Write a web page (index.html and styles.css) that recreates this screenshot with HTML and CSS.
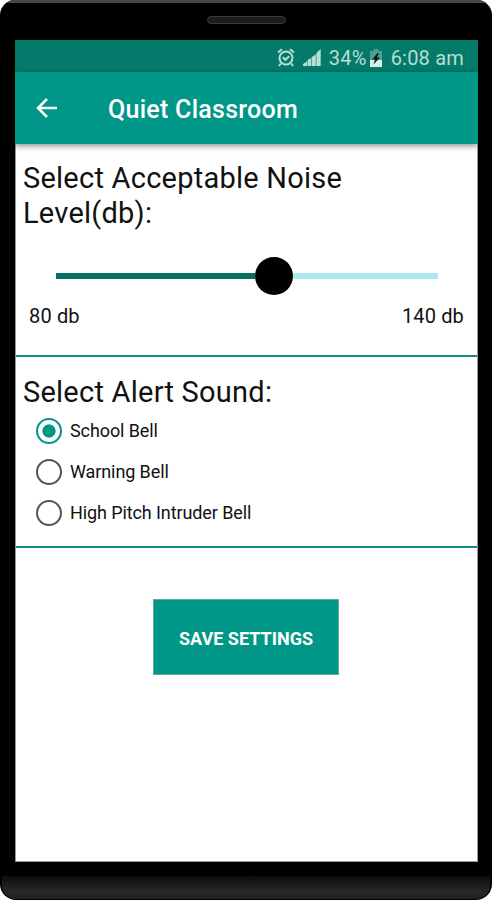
FILE: index.html
```html
<!DOCTYPE html>
<html>
<head>
    <meta charset="UTF-8">
    <meta name="viewport" content="width=device-width, initial-scale=1.0">
    <title>Quiet Classroom</title>
    <link rel="stylesheet" href="styles.css">
</head>
<body>
    <div class="phone">
        <div class="phone-top">
            <div class="speaker"></div>
        </div>

        <div class="screen">
            <!-- Status bar -->
            <div class="status-bar">
                <svg class="alarm-icon" width="18" height="19" viewBox="0 0 18 19" fill="none" stroke="#b9ded5" stroke-width="2">
                    <circle cx="9" cy="10" r="6.5"/>
                    <path d="M1 4.5L5 1.2M17 4.5L13 1.2M3.8 15.5L2 18M14.2 15.5L16 18M5.8 9.3L8.4 11.8L12.2 8.2"/>
                </svg>
                <svg class="signal-icon" width="18" height="17" viewBox="0 0 18 17" fill="#b9ded5">
                    <path d="M0 17v-2l4-2.5V17zM4.5 17v-6l3.7-2v8zM8.8 17V8l4-2.5V17zM13.4 17V4L17.7 0v17z"/>
                </svg>
                <span class="percent">34%</span>
                <svg class="battery-icon" width="12" height="18" viewBox="0 0 12 18">
                    <path d="M0 2h3.5V0h5v2H12v16H0z" fill="#4f9f91"/>
                    <path d="M0 11h12v7H0z" fill="#d9eeea"/>
                    <path d="M7.5 4L2 10.5h3L3.5 15.5L10 8.5H7L9 4z" fill="#071f1b"/>
                </svg>
                <span class="clock">6:08 am</span>
            </div>

            <!-- App bar -->
            <div class="app-bar">
                <svg class="back-icon" width="22" height="20" viewBox="0 0 22 20" fill="none" stroke="#fff" stroke-width="2.5">
                    <path d="M21 10H2M11 1L2 10l9 9"/>
                </svg>
                <h1 class="title">Quiet Classroom</h1>
            </div>

            <!-- Noise level -->
            <div class="section noise">
                <h2 class="heading">Select Acceptable Noise<br>Level(db):</h2>
                <div class="slider">
                    <div class="slider-fill"></div>
                    <div class="slider-thumb"></div>
                    <div class="slider-rest"></div>
                </div>
                <div class="range-labels">
                    <span>80 db</span>
                    <span>140 db</span>
                </div>
            </div>

            <!-- Alert sound -->
            <div class="section sound">
                <h2 class="heading">Select Alert Sound:</h2>
                <div class="options">
                    <label class="option"><span class="radio checked"></span><span class="option-text">School Bell</span></label>
                    <label class="option"><span class="radio"></span><span class="option-text">Warning Bell</span></label>
                    <label class="option"><span class="radio"></span><span class="option-text">High Pitch Intruder Bell</span></label>
                </div>
            </div>

            <button class="save-btn">SAVE SETTINGS</button>
        </div>

        <div class="phone-bottom"></div>
    </div>
</body>
</html>
```
FILE: styles.css
```css
* {
    margin: 0;
    padding: 0;
    box-sizing: border-box;
}

body {
    font-family: Roboto, "Liberation Sans", sans-serif;
    background: #fff;
    color: #111;
    height: 900px;
    overflow: hidden;
}

.phone {
    display: flex;
    flex-direction: column;
    width: 492px;
    height: 900px;
    background: #000;
    border-radius: 15px 15px 16px 16px;
    overflow: hidden;
}

.phone-top {
    height: 40px;
    flex: none;
    border-top: 3px solid #484848;
    padding-top: 13px;
}

.speaker {
    width: 79px;
    height: 8px;
    margin: 0 auto;
    border: 1px solid #3a3a3a;
    border-radius: 4px;
    background: #1c1c1c;
}

.screen {
    display: flex;
    flex-direction: column;
    height: 822px;
    flex: none;
    margin: 0 14px 0 15px;
    background: #fff;
    border: solid #999;
    border-width: 0 1px 1px 1px;
}

.status-bar {
    display: flex;
    align-items: center;
    justify-content: flex-end;
    height: 32px;
    flex: none;
    margin: 0 -1px;
    padding: 3px 14px 0 0;
    background: #047a6b;
    color: #b9ded5;
    font-size: 20px;
}

.signal-icon {
    margin-left: 8px;
}

.percent {
    margin-left: 8px;
    letter-spacing: 0.3px;
}

.battery-icon {
    margin-left: 3px;
}

.clock {
    margin-left: 9px;
    letter-spacing: 0.2px;
}

.app-bar {
    display: flex;
    align-items: center;
    height: 72px;
    flex: none;
    margin: 0 -1px;
    padding: 0 0 0 21px;
    background: #009788;
    box-shadow: 0 2px 6px rgba(0, 0, 0, 0.45);
}

.title {
    margin-left: 50px;
    padding-top: 2px;
    color: #fff;
    font-size: 25px;
    font-weight: 500;
    letter-spacing: 0.27px;
}

.section {
    border-bottom: 2px solid #158c7d;
    flex: none;
}

.noise {
    height: 213px;
    padding: 17px 13px 0 7px;
}

.sound {
    height: 191px;
    padding: 18px 7px 0;
}

.heading {
    font-size: 29px;
    font-weight: 400;
    line-height: 35px;
    letter-spacing: 0.24px;
}

.slider {
    display: flex;
    align-items: center;
    height: 38px;
    margin: 26px 26px 0 33px;
}

.slider-fill {
    width: 199px;
    height: 6px;
    background: #04705f;
}

.slider-thumb {
    width: 38px;
    height: 38px;
    border-radius: 50%;
    background: #000;
}

.slider-rest {
    flex: 1;
    height: 6px;
    background: #ade8ec;
}

.range-labels {
    display: flex;
    justify-content: space-between;
    margin-top: 9px;
    padding-left: 6px;
    font-size: 20px;
    line-height: 24px;
    letter-spacing: 0.15px;
}

.option {
    display: flex;
    align-items: center;
    height: 41px;
    padding-left: 13px;
}

.radio {
    width: 26px;
    height: 26px;
    border: 2px solid #555;
    border-radius: 50%;
}

.radio.checked {
    border-color: #009788;
    background: radial-gradient(circle, #009788 6.2px, transparent 7px);
}

.option-text {
    margin-left: 8px;
    font-size: 18px;
    letter-spacing: -0.1px;
}

.save-btn {
    align-self: center;
    width: 186px;
    height: 76px;
    margin: 51px 1px 0 0;
    padding-top: 2px;
    background: #009788;
    color: #fff;
    border: 1px solid #6aa69e;
    font-family: inherit;
    font-size: 18px;
    font-weight: 700;
}

.phone-bottom {
    flex: 1;
    margin: 14px 2px 1px;
    border-radius: 0 0 14px 14px;
    background: linear-gradient(#0d0d0d, #282828 70%, #202020);
}
```
